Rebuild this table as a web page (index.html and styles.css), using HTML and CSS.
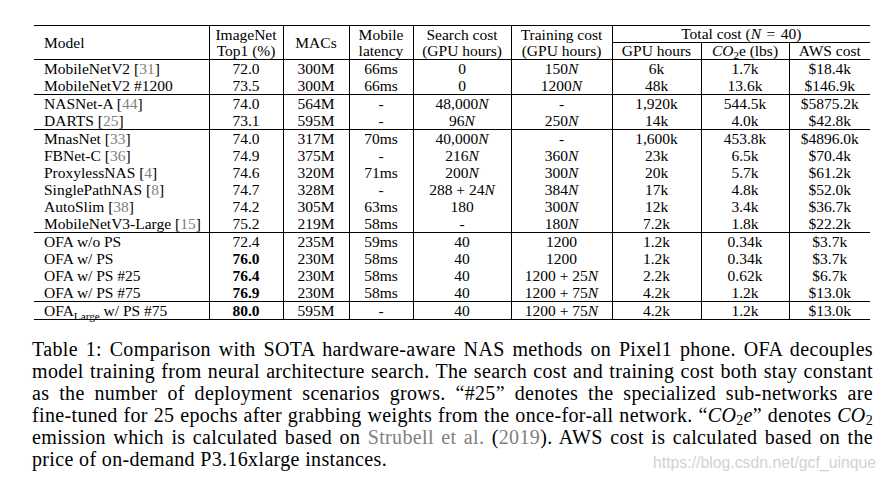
FILE: index.html
```html
<!DOCTYPE html>
<html>
<head>
<meta charset="utf-8">
<link rel="stylesheet" href="styles.css">
</head>
<body>
<div class="page">
  <table class="data">
    <colgroup>
      <col class="c-model"><col class="c-top1"><col class="c-macs"><col class="c-lat"><col class="c-search"><col class="c-train"><col class="c-gpu"><col class="c-co2"><col class="c-aws">
    </colgroup>
    <thead>
      <tr>
        <th rowspan="2" class="name">Model</th>
        <th rowspan="2">ImageNet<br>Top1 (%)</th>
        <th rowspan="2">MACs</th>
        <th rowspan="2">Mobile<br>latency</th>
        <th rowspan="2">Search cost<br>(GPU hours)</th>
        <th rowspan="2">Training cost<br>(GPU hours)</th>
        <th colspan="3" class="total">Total cost (<i>N</i><span class="eq">=</span>40)</th>
      </tr>
      <tr>
        <th>GPU hours</th>
        <th><i>CO</i><sub>2</sub>e (lbs)</th>
        <th>AWS cost</th>
      </tr>
    </thead>
    <tbody>
      <tr><td class="name">MobileNetV2 [<span class="cite">31</span>]</td><td>72.0</td><td>300M</td><td>66ms</td><td>0</td><td>150<i>N</i></td><td>6k</td><td>1.7k</td><td>$18.4k</td></tr>
      <tr><td class="name">MobileNetV2 #1200</td><td>73.5</td><td>300M</td><td>66ms</td><td>0</td><td>1200<i>N</i></td><td>48k</td><td>13.6k</td><td>$146.9k</td></tr>
    </tbody>
    <tbody>
      <tr><td class="name">NASNet-A [<span class="cite">44</span>]</td><td>74.0</td><td>564M</td><td>-</td><td>48,000<i>N</i></td><td>-</td><td>1,920k</td><td>544.5k</td><td>$5875.2k</td></tr>
      <tr><td class="name">DARTS [<span class="cite">25</span>]</td><td>73.1</td><td>595M</td><td>-</td><td>96<i>N</i></td><td>250<i>N</i></td><td>14k</td><td>4.0k</td><td>$42.8k</td></tr>
    </tbody>
    <tbody>
      <tr><td class="name">MnasNet [<span class="cite">33</span>]</td><td>74.0</td><td>317M</td><td>70ms</td><td>40,000<i>N</i></td><td>-</td><td>1,600k</td><td>453.8k</td><td>$4896.0k</td></tr>
      <tr><td class="name">FBNet-C [<span class="cite">36</span>]</td><td>74.9</td><td>375M</td><td>-</td><td>216<i>N</i></td><td>360<i>N</i></td><td>23k</td><td>6.5k</td><td>$70.4k</td></tr>
      <tr><td class="name">ProxylessNAS [<span class="cite">4</span>]</td><td>74.6</td><td>320M</td><td>71ms</td><td>200<i>N</i></td><td>300<i>N</i></td><td>20k</td><td>5.7k</td><td>$61.2k</td></tr>
      <tr><td class="name">SinglePathNAS [<span class="cite">8</span>]</td><td>74.7</td><td>328M</td><td>-</td><td>288 + 24<i>N</i></td><td>384<i>N</i></td><td>17k</td><td>4.8k</td><td>$52.0k</td></tr>
      <tr><td class="name">AutoSlim [<span class="cite">38</span>]</td><td>74.2</td><td>305M</td><td>63ms</td><td>180</td><td>300<i>N</i></td><td>12k</td><td>3.4k</td><td>$36.7k</td></tr>
      <tr><td class="name">MobileNetV3-Large [<span class="cite">15</span>]</td><td>75.2</td><td>219M</td><td>58ms</td><td>-</td><td>180<i>N</i></td><td>7.2k</td><td>1.8k</td><td>$22.2k</td></tr>
    </tbody>
    <tbody>
      <tr><td class="name">OFA w/o PS</td><td>72.4</td><td>235M</td><td>59ms</td><td>40</td><td>1200</td><td>1.2k</td><td>0.34k</td><td>$3.7k</td></tr>
      <tr><td class="name">OFA w/ PS</td><td><b>76.0</b></td><td>230M</td><td>58ms</td><td>40</td><td>1200</td><td>1.2k</td><td>0.34k</td><td>$3.7k</td></tr>
      <tr><td class="name">OFA w/ PS #25</td><td><b>76.4</b></td><td>230M</td><td>58ms</td><td>40</td><td>1200 + 25<i>N</i></td><td>2.2k</td><td>0.62k</td><td>$6.7k</td></tr>
      <tr><td class="name">OFA w/ PS #75</td><td><b>76.9</b></td><td>230M</td><td>58ms</td><td>40</td><td>1200 + 75<i>N</i></td><td>4.2k</td><td>1.2k</td><td>$13.0k</td></tr>
    </tbody>
    <tbody>
      <tr><td class="name">OFA<sub class="lg">Large</sub> w/ PS #75</td><td><b>80.0</b></td><td>595M</td><td>-</td><td>40</td><td>1200 + 75<i>N</i></td><td>4.2k</td><td>1.2k</td><td>$13.0k</td></tr>
    </tbody>
  </table>

  <p class="caption">
    <span class="line">Table 1: Comparison with SOTA hardware-aware NAS methods on Pixel1 phone. OFA decouples</span>
    <span class="line">model training from neural architecture search. The search cost and training cost both stay constant</span>
    <span class="line">as the number of deployment scenarios grows. “#25” denotes the specialized sub-networks are</span>
    <span class="line">fine-tuned for 25 epochs after grabbing weights from the once-for-all network. “<i>CO</i><sub class="m">2</sub><i>e</i>” denotes <i>CO</i><sub class="m">2</sub></span>
    <span class="line">emission which is calculated based on <span class="cite">Strubell et al.</span> (<span class="cite">2019</span>). AWS cost is calculated based on the</span>
    <span class="line last">price of on-demand P3.16xlarge instances.</span>
  </p>
  <div class="watermark">https://blog.csdn.net/gcf_uinque</div>
</div>
</body>
</html>
```

FILE: styles.css
```css
html, body {
  margin: 0;
  padding: 0;
  background: #fff;
}

.page {
  position: relative;
  width: 886px;
  height: 480px;
  padding: 25px 0 0 32px;
  box-sizing: border-box;
  font-family: "Liberation Serif", "Times New Roman", serif;
  color: #000;
}

.data {
  margin-left: 2px;
  border-collapse: collapse;
  table-layout: fixed;
  width: 836px;
  font-size: 15.5px;
  line-height: 17px;
  border-top: 1px solid #000;
  border-bottom: 1px solid #000;
}

.c-model { width: 175px; }
.c-top1 { width: 74px; }
.c-macs { width: 66px; }
.c-lat { width: 64px; }
.c-search { width: 98px; }
.c-train { width: 101px; }
.c-gpu { width: 89px; }
.c-co2 { width: 88px; }
.c-aws { width: 81px; }

.data th,
.data td {
  padding: 0;
  text-align: center;
  vertical-align: middle;
  white-space: nowrap;
  font-weight: normal;
}

.data th {
  line-height: 16px;
}

.data th:not(:last-child),
.data td:not(:last-child) {
  border-right: 1px solid #000;
}

.data th.total {
  border-bottom: 1px solid #000;
}

.data .eq {
  padding: 0 0.35em;
}

.data tbody {
  border-top: 1px solid #000;
}

.data .name {
  text-align: left;
  padding-left: 10px;
}

.data b {
  font-weight: bold;
}

.cite {
  color: #808080;
}

sub {
  font-size: 0.7em;
  line-height: 0;
  vertical-align: -0.3em;
}

sub.lg {
  font-size: 0.72em;
  vertical-align: -0.35em;
}

.caption {
  margin: 18px 0 0 0;
  width: 841px;
  font-size: 20px;
  line-height: 22px;
  letter-spacing: 0.35px;
  word-spacing: -1.5px;
}

.caption .line {
  display: block;
  white-space: nowrap;
  text-align: justify;
  text-align-last: justify;
}

.caption .line.last {
  text-align-last: left;
  word-spacing: 0;
}

.caption sub.m {
  font-size: 0.7em;
  vertical-align: -0.2em;
}

.watermark {
  position: absolute;
  left: 653px;
  top: 455px;
  font-family: "Liberation Sans", Arial, sans-serif;
  font-size: 15.8px;
  line-height: 16px;
  letter-spacing: 0;
  color: #d2d2d2;
  white-space: nowrap;
}
```
